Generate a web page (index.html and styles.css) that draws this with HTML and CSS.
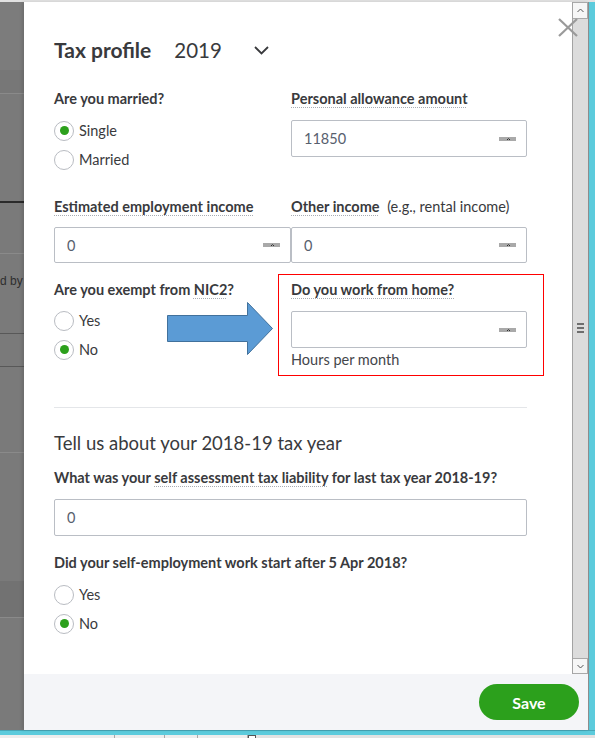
FILE: index.html
```html
<!DOCTYPE html>
<html lang="en">
<head>
<meta charset="utf-8">
<title>Tax profile</title>
<link rel="stylesheet" href="styles.css">
</head>
<body>
<div class="screen">
  <div class="topline"></div>
  <div class="main">
    <div class="backdrop">
      <div class="band b1"></div>
      <div class="band b2"></div>
      <div class="band line-light"></div>
      <div class="band b4"></div>
      <div class="band line-dark"></div>
      <div class="band b6"></div>
      <div class="band line-light"></div>
      <div class="band b8"><span class="cut-text">d by</span></div>
      <div class="band line-mid"></div>
      <div class="band b10"></div>
      <div class="band line-mid"></div>
      <div class="band b12"></div>
      <div class="band line-light"></div>
      <div class="band b14"></div>
      <div class="band b15"></div>
      <div class="band line-light"></div>
      <div class="band b17"></div>
    </div>

    <div class="dialog">
      <div class="dialog-body">
        <div class="content">
          <div class="header">
            <h1 class="title">Tax profile</h1>
            <span class="year">2019</span>
            <svg class="chevron" width="15" height="9" viewBox="0 0 15 9"><polyline points="1,1 7.5,7.5 14,1" fill="none" stroke="#393a3d" stroke-width="1.8"/></svg>
          </div>

          <div class="grid row1">
            <div class="group">
              <div class="label">Are you married?</div>
              <div class="radios r-first">
                <div class="radio"><span class="dot checked"></span>Single</div>
                <div class="radio"><span class="dot"></span>Married</div>
              </div>
            </div>
            <div class="group">
              <div class="label"><span class="dotted">Personal allowance amount</span></div>
              <div class="field">
                <span class="value">11850</span>
                <svg class="calc" width="17" height="4" viewBox="0 0 17 4"><rect width="17" height="4" fill="#a9a9a9"/><rect x="8" y="2" width="1" height="1" fill="#2f2f2f"/><rect x="10" y="2" width="1" height="1" fill="#2f2f2f"/><rect x="9" y="1" width="1" height="1" fill="#5a5a5a"/></svg>
              </div>
            </div>
          </div>

          <div class="grid row2">
            <div class="group">
              <div class="label"><span class="dotted">Estimated employment income</span></div>
              <div class="field field-tight">
                <span class="value">0</span>
                <svg class="calc" width="17" height="4" viewBox="0 0 17 4"><rect width="17" height="4" fill="#a9a9a9"/><rect x="8" y="2" width="1" height="1" fill="#2f2f2f"/><rect x="10" y="2" width="1" height="1" fill="#2f2f2f"/><rect x="9" y="1" width="1" height="1" fill="#5a5a5a"/></svg>
              </div>
            </div>
            <div class="group">
              <div class="label"><span class="dotted">Other income</span> <span class="light">(e.g., rental income)</span></div>
              <div class="field field-tight">
                <span class="value">0</span>
                <svg class="calc" width="17" height="4" viewBox="0 0 17 4"><rect width="17" height="4" fill="#a9a9a9"/><rect x="8" y="2" width="1" height="1" fill="#2f2f2f"/><rect x="10" y="2" width="1" height="1" fill="#2f2f2f"/><rect x="9" y="1" width="1" height="1" fill="#5a5a5a"/></svg>
              </div>
            </div>
          </div>

          <div class="grid row3">
            <div class="group">
              <div class="label">Are you exempt from <span class="dotted">NIC2</span>?</div>
              <div class="radios r-second">
                <div class="radio"><span class="dot"></span>Yes</div>
                <div class="radio"><span class="dot checked"></span>No</div>
              </div>
            </div>
            <div class="group">
              <div class="label"><span class="dotted">Do you work from home?</span></div>
              <div class="field">
                <span class="value"></span>
                <svg class="calc" width="17" height="4" viewBox="0 0 17 4"><rect width="17" height="4" fill="#a9a9a9"/><rect x="8" y="2" width="1" height="1" fill="#2f2f2f"/><rect x="10" y="2" width="1" height="1" fill="#2f2f2f"/><rect x="9" y="1" width="1" height="1" fill="#5a5a5a"/></svg>
              </div>
              <div class="help">Hours per month</div>
            </div>
          </div>

          <div class="divider"></div>

          <h2 class="section">Tell us about your 2018-19 tax year</h2>

          <div class="label q1">What was your <span class="dotted">self assessment tax liability</span> for last tax year 2018-19?</div>
          <div class="field wide"><span class="value">0</span></div>

          <div class="label q2">Did your self-employment work start after 5 Apr 2018?</div>
          <div class="radios r-third">
            <div class="radio"><span class="dot"></span>Yes</div>
            <div class="radio"><span class="dot checked"></span>No</div>
          </div>

          <div class="highlight-box"></div>
          <svg class="arrow" width="107" height="54" viewBox="0 0 107 54"><polygon points="0.5,13.5 80.5,13.5 80.5,0.5 105.5,26.5 80.5,52.5 80.5,39.5 0.5,39.5" fill="#5b9bd5" stroke="#41719c" stroke-width="1"/></svg>
        </div>

        <div class="scrollbar">
          <div class="sb-btn"><svg width="7" height="5" viewBox="0 0 7 5"><polyline points="0.5,4 3.5,1 6.5,4" fill="none" stroke="#555" stroke-width="1"/></svg></div>
          <div class="sb-track">
            <div class="grip"><span></span><span></span><span></span></div>
          </div>
          <div class="sb-btn"><svg width="7" height="5" viewBox="0 0 7 5"><polyline points="0.5,1 3.5,4 6.5,1" fill="none" stroke="#555" stroke-width="1"/></svg></div>
        </div>
      </div>

      <div class="footer">
        <button class="save">Save</button>
      </div>

      <svg class="close" width="20" height="19" viewBox="0 0 20 19"><line x1="1" y1="1" x2="19" y2="18" stroke="#9a9a9a" stroke-width="2.2"/><line x1="19" y1="1" x2="1" y2="18" stroke="#9a9a9a" stroke-width="2.2"/></svg>
    </div>

    <div class="cyan-right"></div>
  </div>
  <div class="cyan-bottom"></div>
  <div class="taskbar">
    <span class="tb s1"></span><span class="tb s2"></span><span class="tb s3"></span><span class="tb s4"></span><span class="tb s5"></span><span class="tb s6"></span>
  </div>
</div>
</body>
</html>
```

FILE: styles.css
```css
* { box-sizing: border-box; margin: 0; padding: 0; }
html, body { width: 595px; height: 738px; overflow: hidden; }
body { font-family: Lato, "Open Sans", sans-serif; color: #393a3d; }

.screen { width: 595px; height: 738px; display: flex; flex-direction: column; background: #7a7a7a; }
.topline { height: 2px; flex: none; background: #e2e2e2; }
.main { height: 728px; flex: none; display: flex; }

/* left backdrop */
.backdrop { width: 24px; flex: none; display: flex; flex-direction: column; }
.band { flex: none; background: #7a7a7a; }
.b1 { height: 68px; background: #7c7c7c; }
.b2 { height: 23px; background: #777; }
.b4 { height: 107px; }
.b6 { height: 50px; }
.b8 { height: 79px; display: flex; padding: 19px 0 0 0; }
.b10 { height: 32px; }
.b12 { height: 85px; }
.b14 { height: 128px; }
.b15 { height: 36px; background: #727272; }
.b17 { flex: 1; }
.line-light { height: 1px; background: #8a8a8a; }
.line-dark { height: 2px; background: #2b2b2b; }
.line-mid { height: 1px; background: #585858; }
.cut-text { font-family: "Liberation Sans", sans-serif; font-size: 12px; line-height: 16px; color: #2e2e2e; white-space: nowrap; }

/* dialog */
.dialog { width: 565px; flex: none; display: flex; flex-direction: column; position: relative; background: #fff; border-right: 1px solid #8d8d8d; box-shadow: -2px 0 3px rgba(0,0,0,0.12); }
.dialog-body { height: 672px; flex: none; display: flex; }
.content { width: 548px; flex: none; padding: 34px 0 0 30px; position: relative; }

.header { height: 28px; display: flex; align-items: center; }
.title { font-size: 21px; font-weight: 700; line-height: 28px; }
.year { font-size: 20.5px; margin-left: 23px; line-height: 28px; }
.chevron { margin-left: 32px; margin-top: 1px; }

.grid { display: grid; grid-template-columns: 237px 236px; }
.row1 { margin-top: 25px; }
.row2 { margin-top: 23px; }
.row3 { margin-top: 17px; }

.label { font-size: 14.5px; font-weight: 700; line-height: 20px; white-space: nowrap; }
.light { font-weight: 400; margin-left: 4px; }
.dotted { text-decoration: underline dotted #a9adb4; text-decoration-thickness: 1px; text-underline-offset: 3px; }

.radios { display: flex; flex-direction: column; }
.r-first { margin-top: 7px; }
.r-second { margin-top: 6px; }
.r-third { margin-top: 7px; }
.radio { height: 29px; display: flex; align-items: center; gap: 5px; font-size: 14.5px; }
.dot { width: 20px; height: 20px; border: 1px solid #b9bcc2; border-radius: 50%; display: flex; align-items: center; justify-content: center; }
.dot.checked::after { content: ""; width: 9px; height: 9px; border-radius: 50%; background: #2ca01c; }

.field { height: 37px; margin-top: 11px; border: 1px solid #babec5; border-radius: 2px; display: flex; align-items: center; justify-content: space-between; padding: 0 10px 0 12px; font-size: 14.5px; color: #57606e; }
.field-tight { margin-top: 10px; height: 36px; }
.field.wide { width: 473px; }
.help { font-size: 14.5px; line-height: 20px; margin-top: 2px; color: #44464b; }

.divider { width: 473px; height: 1px; background: #e4e6e9; margin-top: 37px; }
.section { font-size: 18.5px; font-weight: 400; line-height: 26px; margin-top: 22px; }
.q1 { margin-top: 12px; }
.q2 { margin-top: 17px; }

.highlight-box { position: absolute; left: 254px; top: 272px; width: 266px; height: 102px; border: 1px solid #f00; }
.arrow { position: absolute; left: 143px; top: 300px; }

/* scrollbar */
.scrollbar { width: 16px; flex: none; display: flex; flex-direction: column; background: #dcdcdc; border-left: 1px solid #a3a3a3; }
.sb-btn { height: 17px; flex: none; background: #f6f6f6; border: 1px solid #a9a9a9; border-left: none; display: flex; align-items: center; justify-content: center; }
.sb-btn:last-child { height: 16px; }
.sb-track { flex: 1; display: flex; flex-direction: column; align-items: center; }
.grip { margin-top: 304px; display: flex; flex-direction: column; gap: 2px; }
.grip span { width: 7px; height: 2px; background: #6e6e6e; }

/* footer */
.footer { height: 56px; flex: none; background: #f4f5f8; display: flex; justify-content: flex-end; align-items: center; padding-right: 9px; }
.save { width: 100px; height: 36px; border: none; border-radius: 18px; background: #2ca01c; color: #fff; font-family: Lato, sans-serif; font-size: 16px; font-weight: 700; }

.close { position: absolute; left: 534px; top: 16px; }

.cyan-right { width: 6px; flex: none; background: #5ccbdc; }
.cyan-bottom { height: 5px; flex: none; background: #5ccbdc; border-top: 1px solid #48a6b6; }
.taskbar { height: 3px; flex: none; background: #ededed; display: flex; }
.tb { height: 3px; border-right: 1px solid #a8a8a8; }
.s1 { width: 115px; }
.s2 { width: 50px; }
.s3 { width: 33px; }
.s4 { width: 50px; }
.s5 { width: 8px; background: #fff; border: 1px solid #555; border-bottom: none; }
.s6 { flex: 1; background: #e2e2e2; border-right: none; }
```
